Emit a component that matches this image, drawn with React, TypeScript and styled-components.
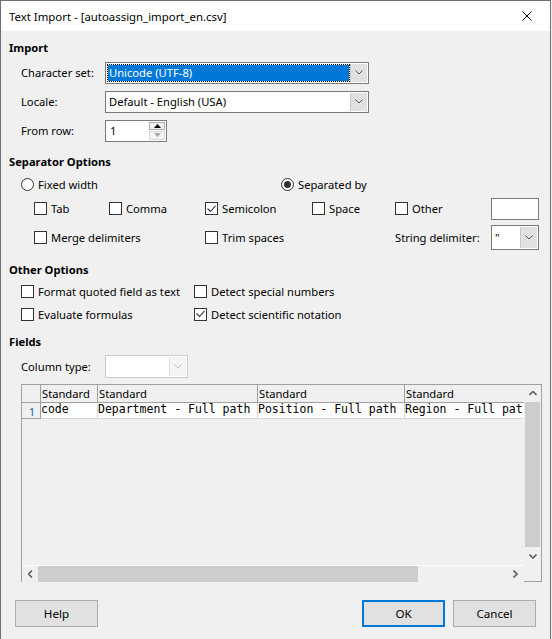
import styled, { createGlobalStyle, css } from 'styled-components';

const GlobalStyle = createGlobalStyle`
  html, body { margin: 0; padding: 0; background: #f0f0f0; }
  body {
    font-family: "Noto Sans", "Open Sans", sans-serif;
    font-size: 11.2px;
    color: #000;
  }
  * { box-sizing: border-box; }
`;

const Window = styled.div`
  width: 551px;
  height: 639px;
  border: 1px solid #707070;
  border-bottom: none;
  background: #f0f0f0;
  display: flex;
  flex-direction: column;
  overflow: hidden;
`;

const TitleBar = styled.div`
  height: 30px;
  flex-shrink: 0;
  background: #fff;
  display: flex;
  align-items: center;
  justify-content: space-between;
  padding-left: 8px;
  font-size: 11.4px;
`;

const CloseButton = styled.div`
  width: 46px;
  height: 30px;
  display: flex;
  align-items: center;
  justify-content: center;
`;

const Body = styled.div`
  display: flex;
  flex-direction: column;
  padding-top: 7px;
`;

const Section = styled.section`
  & + & { margin-top: 7px; }
`;

const Heading = styled.div`
  height: 20px;
  line-height: 20px;
  padding-left: 8px;
  font-weight: bold;
`;

const FieldRow = styled.div<{ $h: number }>`
  height: ${p => p.$h}px;
  display: flex;
  align-items: center;
  padding-left: 20px;
`;

const FieldLabel = styled.span`
  width: 84px;
`;

const Combo = styled.div<{ $w: number; $h?: number; $disabled?: boolean }>`
  width: ${p => p.$w}px;
  height: ${p => p.$h ?? 22}px;
  display: flex;
  padding: 1px;
  background: #fff;
  border: 1px solid ${p => (p.$disabled ? '#cccccc' : '#7a7a7a')};
`;

const ComboText = styled.div<{ $selected?: boolean }>`
  flex: 1;
  display: flex;
  align-items: center;
  padding-left: 2px;
  white-space: nowrap;
  overflow: hidden;
  ${p =>
    p.$selected &&
    css`
      padding-left: 1px;
      background: #0078d7;
      background-clip: padding-box;
      color: #fff;
      border: 1px dotted #000;
    `}
`;

const DropButton = styled.div<{ $disabled?: boolean }>`
  width: 17px;
  display: flex;
  align-items: center;
  justify-content: center;
  background: ${p => (p.$disabled ? '#f4f4f4' : '#e1e1e1')};
  border-left: 1px solid ${p => (p.$disabled ? '#e0e0e0' : '#c8c8c8')};
`;

const TextBox = styled.div<{ $w: number }>`
  width: ${p => p.$w}px;
  height: 22px;
  background: #fff;
  border: 1px solid #7a7a7a;
  display: flex;
  align-items: center;
  padding-left: 3px;
`;

const Spin = styled.div`
  width: 62px;
  height: 22px;
  display: flex;
  padding: 1px;
  background: #fff;
  border: 1px solid #7a7a7a;
`;

const SpinValue = styled.div`
  flex: 1;
  display: flex;
  align-items: center;
  padding-left: 3px;
`;

const SpinButtons = styled.div`
  width: 16px;
  display: flex;
  flex-direction: column;
  gap: 1px;
`;

const SpinStep = styled.div<{ $disabled?: boolean }>`
  flex: 1;
  display: flex;
  align-items: center;
  justify-content: center;
  background: ${p => (p.$disabled ? '#f4f4f4' : '#efefef')};
  border: 1px solid ${p => (p.$disabled ? '#d9d9d9' : '#adadad')};
`;

const Choice = styled.label`
  display: flex;
  align-items: center;
  gap: 4px;
  white-space: nowrap;
`;

const Box = styled.span`
  width: 13px;
  height: 13px;
  flex-shrink: 0;
  border: 1px solid #333;
  background: #fff;
  display: flex;
  align-items: center;
  justify-content: center;
`;

const Round = styled(Box)`
  border-radius: 50%;
`;

const Dot = styled.span`
  width: 7px;
  height: 7px;
  border-radius: 50%;
  background: #333;
`;

const RadioRow = styled.div`
  height: 24px;
  display: flex;
  align-items: center;
  padding-left: 20px;
  & > :first-child { width: 260px; }
`;

const SeparatorGrid = styled.div`
  display: grid;
  grid-template-columns: 75px 96px 107px 83px 96px 48px;
  grid-template-rows: 25px 32px;
  align-items: center;
  padding-left: 33px;
`;

const Span2 = styled.div`
  grid-column: span 2;
`;

const OptionsGrid = styled.div`
  display: grid;
  grid-template-columns: 173px auto;
  grid-template-rows: 23px 22px;
  align-items: center;
  padding-left: 20px;
`;

const Table = styled.div`
  margin: 4px 0 0 20px;
  width: 521px;
  height: 198px;
  border: 1px solid #a0a0a0;
  border-bottom: none;
  display: grid;
  grid-template-columns: 1fr 17px;
  grid-template-rows: 1fr 17px;
`;

const Viewport = styled.div`
  overflow: hidden;
  background: #f0f0f0;
`;

const TableRow = styled.div`
  display: flex;
  white-space: nowrap;
`;

const HeadCell = styled.div<{ $w: number }>`
  flex: 0 0 ${p => p.$w}px;
  height: 18px;
  line-height: 18px;
  padding-left: 1px;
  background: #f0f0f0;
  border-right: 1px solid #a0a0a0;
  border-bottom: 1px solid #a0a0a0;
  overflow: hidden;
`;

const RowNumber = styled.div`
  flex: 0 0 19px;
  height: 16px;
  line-height: 18px;
  text-align: center;
  padding-left: 2px;
  color: #1f5aa6;
  background: #f0f0f0;
  border-right: 1px solid #a0a0a0;
  border-bottom: 1px solid #a0a0a0;
`;

const DataCell = styled.div<{ $w: number }>`
  flex: 0 0 ${p => p.$w}px;
  height: 16px;
  line-height: 12px;
  font-family: "DejaVu Sans Mono", monospace;
  font-size: 11.5px;
  background: #fff;
  border-right: 1px solid #d8d8d8;
  border-bottom: 1px solid #d8d8d8;
  overflow: hidden;
`;

const VScroll = styled.div`
  background: #f0f0f0;
  display: flex;
  flex-direction: column;
`;

const HScroll = styled.div`
  background: #f0f0f0;
  border-top: 1px solid #fff;
  display: flex;
`;

const ArrowCell = styled.div<{ $len: number }>`
  flex: 0 0 ${p => p.$len}px;
  display: flex;
  align-items: center;
  justify-content: center;
`;

const Thumb = styled.div<{ $len: number; $vertical?: boolean }>`
  flex: 0 0 ${p => p.$len}px;
  background: #cdcdcd;
  ${p => (p.$vertical ? 'margin: 0 1px;' : 'margin: 0;')}
`;

const Track = styled.div`
  flex: 1;
`;

const Corner = styled.div`
  background: #f0f0f0;
  border-bottom: 1px solid #a0a0a0;
`;

const Footer = styled.div`
  margin-top: 18px;
  padding: 0 14px;
  display: flex;
  align-items: center;
  gap: 8px;
  font-size: 11.6px;
`;

const Button = styled.div<{ $primary?: boolean }>`
  width: 83px;
  height: 27px;
  display: flex;
  align-items: center;
  justify-content: center;
  background: #e1e1e1;
  border: ${p => (p.$primary ? '2px solid #0078d7' : '1px solid #adadad')};
  &:first-child { margin-right: auto; }
`;

function Chevron({ color = '#555', dir = 'down', bold = false }: { color?: string; dir?: 'down' | 'up' | 'left' | 'right'; bold?: boolean }) {
  const pts = {
    down: '0.5,0.5 4,4 7.5,0.5',
    up: '0.5,4 4,0.5 7.5,4',
    left: '4,0.5 0.5,4 4,7.5',
    right: '0.5,0.5 4,4 0.5,7.5',
  }[dir];
  const vertical = dir === 'down' || dir === 'up';
  return (
    <svg width={vertical ? 8 : 5} height={vertical ? 5 : 8} viewBox={vertical ? '0 0 8 5' : '0 0 5 8'}>
      <polyline points={pts} fill="none" stroke={color} strokeWidth={bold ? 1.6 : 1} />
    </svg>
  );
}

function Check({ checked, label }: { checked?: boolean; label: string }) {
  return (
    <Choice>
      <Box>
        {checked && (
          <svg width="9" height="8" viewBox="0 0 9 8">
            <polyline points="0.5,3.5 3.5,6.5 8.5,0.8" fill="none" stroke="#333" strokeWidth="1.1" />
          </svg>
        )}
      </Box>
      {label}
    </Choice>
  );
}

function Radio({ checked, label }: { checked?: boolean; label: string }) {
  return (
    <Choice>
      <Round>{checked && <Dot />}</Round>
      {label}
    </Choice>
  );
}

function DropDown({ w, h, text, selected, disabled }: { w: number; h?: number; text: string; selected?: boolean; disabled?: boolean }) {
  return (
    <Combo $w={w} $h={h} $disabled={disabled}>
      <ComboText $selected={selected}>{text}</ComboText>
      <DropButton $disabled={disabled}>
        <Chevron color={disabled ? '#bdbdbd' : '#555'} />
      </DropButton>
    </Combo>
  );
}

const columns = [
  { w: 57, value: 'code' },
  { w: 160, value: 'Department - Full path' },
  { w: 147, value: 'Position - Full path' },
  { w: 140, value: 'Region - Full pat' },
];

export default function App() {
  return (
    <>
      <GlobalStyle />
      <Window>
        <TitleBar>
          <span>Text Import - [autoassign_import_en.csv]</span>
          <CloseButton>
            <svg width="10" height="10" viewBox="0 0 10 10">
              <path d="M0.5 0.5 L9.5 9.5 M9.5 0.5 L0.5 9.5" stroke="#000" strokeWidth="1" />
            </svg>
          </CloseButton>
        </TitleBar>

        <Body>
          <Section>
            <Heading>Import</Heading>
            <FieldRow $h={29}>
              <FieldLabel>Character set:</FieldLabel>
              <DropDown w={264} text="Unicode (UTF-8)" selected />
            </FieldRow>
            <FieldRow $h={29}>
              <FieldLabel>Locale:</FieldLabel>
              <DropDown w={264} text="Default - English (USA)" />
            </FieldRow>
            <FieldRow $h={29}>
              <FieldLabel>From row:</FieldLabel>
              <Spin>
                <SpinValue>1</SpinValue>
                <SpinButtons>
                  <SpinStep>
                    <svg width="7" height="4" viewBox="0 0 7 4"><polygon points="0,4 3.5,0 7,4" fill="#000" /></svg>
                  </SpinStep>
                  <SpinStep $disabled>
                    <svg width="7" height="4" viewBox="0 0 7 4"><polygon points="0,0 3.5,4 7,0" fill="#a8a8a8" /></svg>
                  </SpinStep>
                </SpinButtons>
              </Spin>
            </FieldRow>
          </Section>

          <Section>
            <Heading>Separator Options</Heading>
            <RadioRow>
              <Radio label="Fixed width" />
              <Radio label="Separated by" checked />
            </RadioRow>
            <SeparatorGrid>
              <Check label="Tab" />
              <Check label="Comma" />
              <Check label="Semicolon" checked />
              <Check label="Space" />
              <Check label="Other" />
              <TextBox $w={48} />
              <Span2><Check label="Merge delimiters" /></Span2>
              <Span2><Check label="Trim spaces" /></Span2>
              <span>String delimiter:</span>
              <DropDown w={48} h={25} text={'"'} />
            </SeparatorGrid>
          </Section>

          <Section>
            <Heading>Other Options</Heading>
            <OptionsGrid>
              <Check label="Format quoted field as text" />
              <Check label="Detect special numbers" />
              <Check label="Evaluate formulas" />
              <Check label="Detect scientific notation" checked />
            </OptionsGrid>
          </Section>

          <Section>
            <Heading>Fields</Heading>
            <FieldRow $h={28}>
              <FieldLabel>Column type:</FieldLabel>
              <DropDown w={83} h={23} text="" disabled />
            </FieldRow>
            <Table>
              <Viewport>
                <TableRow>
                  <HeadCell $w={19} />
                  {columns.map((c, i) => (
                    <HeadCell key={i} $w={c.w}>Standard</HeadCell>
                  ))}
                </TableRow>
                <TableRow>
                  <RowNumber>1</RowNumber>
                  {columns.map((c, i) => (
                    <DataCell key={i} $w={c.w}>{c.value}</DataCell>
                  ))}
                </TableRow>
              </Viewport>
              <VScroll>
                <ArrowCell $len={17}><Chevron dir="up" color="#606060" bold /></ArrowCell>
                <Thumb $len={145} $vertical />
                <Track />
                <ArrowCell $len={17}><Chevron dir="down" color="#606060" bold /></ArrowCell>
              </VScroll>
              <HScroll>
                <ArrowCell $len={16}><Chevron dir="left" color="#606060" bold /></ArrowCell>
                <Thumb $len={380} />
                <Track />
                <ArrowCell $len={17}><Chevron dir="right" color="#606060" bold /></ArrowCell>
              </HScroll>
              <Corner />
            </Table>
          </Section>
        </Body>

        <Footer>
          <Button>Help</Button>
          <Button $primary>OK</Button>
          <Button>Cancel</Button>
        </Footer>
      </Window>
    </>
  );
}
